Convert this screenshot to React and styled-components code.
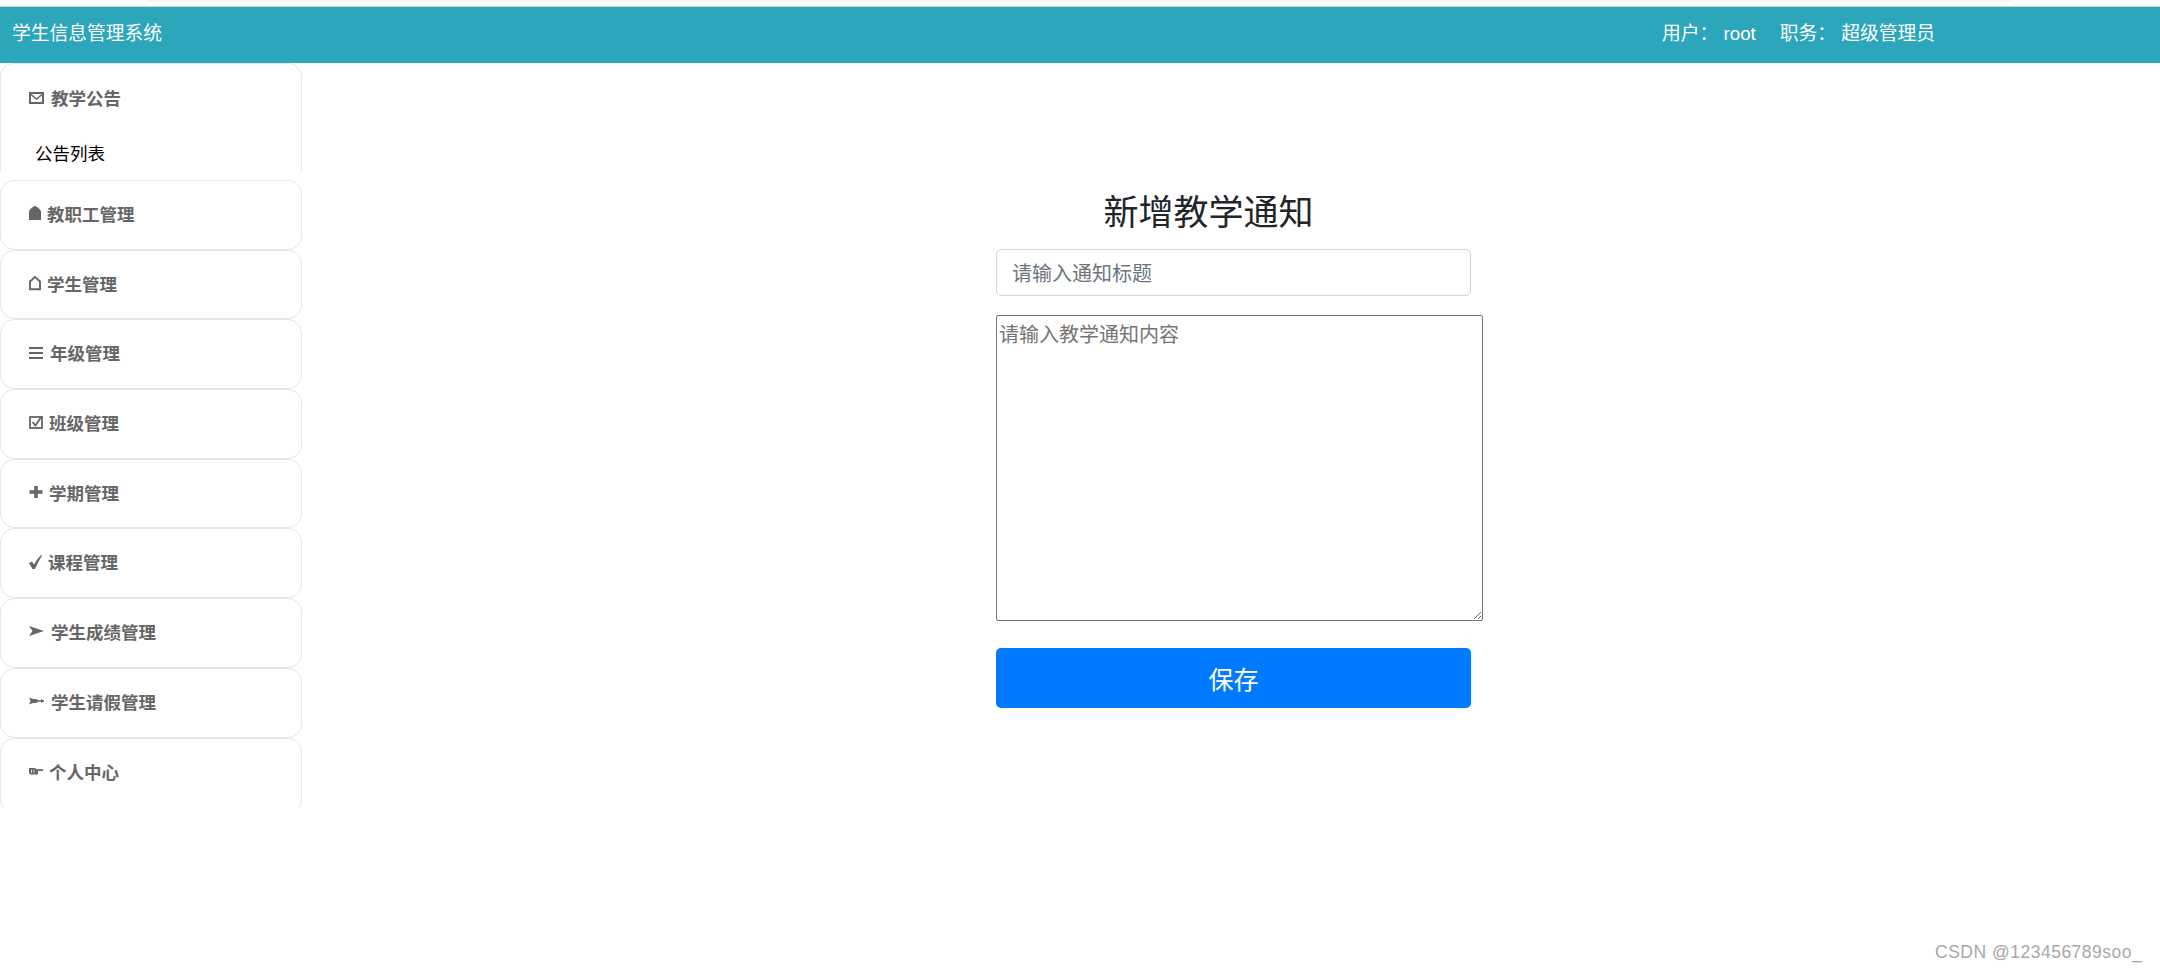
import React from "react";
import styled, { createGlobalStyle } from "styled-components";

const CJK = `"Noto Sans CJK SC", "Liberation Sans", sans-serif`;

const GlobalStyle = createGlobalStyle`
    html, body {
        margin: 0;
        padding: 0;
        background: #fff;
    }
    body {
        font-family: "Liberation Sans", "Noto Sans CJK SC", sans-serif;
    }
    * {
        box-sizing: border-box;
    }
`;

const Page = styled.div`
    position: relative;
    width: 2160px;
    height: 970px;
    overflow: hidden;
`;

const TopStrip = styled.div`
    height: 7px;
    border-bottom: 1px solid #d4d6d6;
`;

const TopBand = styled.div`
    height: 1px;
    margin: 0 149px 0 147px;
    background: #f3f3f3;
`;

const Header = styled.header`
    height: 56px;
    background: #2ca6bb;
    color: #fff;
    display: flex;
    align-items: center;
    font-size: 18.75px;
    font-family: "Liberation Sans", "Noto Sans CJK SC", sans-serif;
    padding: 0 0 7px 12px;
`;

const Brand = styled.div`
    width: 1650px;
`;

const UserInfo = styled.div`
    display: flex;
    white-space: pre;
`;

const InfoItem = styled.span`
    margin-right: 24px;
`;

const Body = styled.div`
    display: flex;
`;

const Sidebar = styled.nav`
    width: 302px;
    height: 745px;
    overflow: hidden;
    flex: none;
`;

const Panel = styled.div`
    height: ${(p) => (p.$open ? "108px" : p.$last ? "76px" : "69.7px")};
    margin-bottom: ${(p) => (p.$open ? "9px" : "0")};
    border: 1px solid #e6e6e6;
    border-bottom: ${(p) => (p.$open ? "none" : "1px solid #e6e6e6")};
    border-radius: ${(p) => (p.$open ? "14px 14px 0 0" : "14px")};
    overflow: hidden;
`;

const PanelHead = styled.div`
    height: ${(p) => (p.$open ? "70px" : "100%")};
    padding-left: 28px;
    display: flex;
    align-items: center;
    gap: ${(p) => p.$gap}px;
    color: #666;
    font-size: 17.5px;
    font-weight: 700;
    font-family: ${CJK};
    padding-bottom: ${(p) => (p.$last ? "9px" : "3px")};
`;

const SubItem = styled.div`
    padding-left: 34px;
    color: #000;
    font-size: 17.5px;
    line-height: 44px;
    margin-top: -3px;
    font-family: ${CJK};
`;

const Main = styled.main`
    flex: 1;
    padding: 126px 0 0 694px;
`;

const Form = styled.form`
    width: 475px;
    display: flex;
    flex-direction: column;
    align-items: flex-start;
`;

const Title = styled.h2`
    width: 425px;
    margin: 0 0 18px;
    font-size: 35px;
    line-height: 42px;
    font-weight: 400;
    color: #212529;
    text-align: center;
    font-family: ${CJK};
`;

const TitleInput = styled.input`
    width: 475px;
    height: 47px;
    padding: 0 15px;
    border: 1px solid #ced4da;
    border-radius: 5px;
    outline: none;
    font-size: 20px;
    font-family: ${CJK};
    &::placeholder {
        color: #6c757d;
    }
`;

const ContentArea = styled.textarea`
    display: block;
    width: 487px;
    height: 306px;
    margin-top: 19px;
    padding: 3px 2px;
    border: 1px solid #767676;
    border-radius: 2px;
    outline: none;
    font-size: 20px;
    line-height: 30px;
    font-family: ${CJK};
    &::placeholder {
        color: #757575;
    }
`;

const SaveButton = styled.button`
    width: 475px;
    height: 60px;
    margin-top: 27px;
    border: none;
    border-radius: 5px;
    background: #007bff;
    color: #fff;
    font-size: 25px;
    font-family: ${CJK};
`;

const Watermark = styled.div`
    position: absolute;
    left: 1935px;
    top: 941px;
    color: #a8a8a8;
    font-size: 17.5px;
    line-height: 22px;
    letter-spacing: 0.5px;
    white-space: nowrap;
`;

const Icon = ({ w = 15, children }) => (
    <svg width={w} height="16" viewBox={`0 0 ${w} 16`} style={{ flex: "none" }}>
        {children}
    </svg>
);

const MailIcon = () => (
    <Icon>
        <rect x="1" y="3" width="13" height="10" fill="none" stroke="#666" strokeWidth="2" />
        <path d="M2 4.5 L7.5 9 L13 4.5" fill="none" stroke="#666" strokeWidth="1.6" />
    </Icon>
);

const BellIcon = () => (
    <Icon w={12}>
        <path d="M0 15 V7 Q0 5 2 3.5 L4.5 1.5 Q6 0.6 7.5 1.5 L10 3.5 Q12 5 12 7 V15 Z" fill="#666" />
    </Icon>
);

const HomeIcon = () => (
    <Icon w={12}>
        <path d="M1 14.2 V6.5 L6 2 L11 6.5 V14.2 Z" fill="none" stroke="#666" strokeWidth="1.9" />
    </Icon>
);

const ListIcon = () => (
    <Icon w={14}>
        <path d="M0 3 H14 M0 8 H14 M0 13 H14" stroke="#666" strokeWidth="2" />
    </Icon>
);

const CheckBoxIcon = () => (
    <Icon w={14}>
        <rect x="1" y="3" width="12" height="11" fill="none" stroke="#666" strokeWidth="1.8" />
        <path d="M3.5 8 L6.5 11.5 L12.5 2.5" fill="none" stroke="#666" strokeWidth="1.9" />
    </Icon>
);

const PlusIcon = () => (
    <Icon w={14}>
        <path d="M7 2 V14 M0.5 8 H13.5" stroke="#666" strokeWidth="3.6" />
    </Icon>
);

const CheckIcon = () => (
    <Icon w={13}>
        <path d="M0 9 L3 7.5 L5 10.5 Q8 5 12 1 L13 1.5 Q9 8 6 15 H3.5 Z" fill="#666" />
    </Icon>
);

const ArrowIcon = () => (
    <Icon>
        <path d="M0 3 L15 8 L0 13 L3.5 8 Z" fill="#666" />
    </Icon>
);

const DartIcon = () => (
    <Icon>
        <path d="M0 4.5 L4 6 H7 L9 7 V9 L7 10 H4 L0 11.5 L1.5 8 Z" fill="#666" />
        <path d="M9 8 H15" stroke="#666" strokeWidth="1.3" />
        <path d="M12 6 L15 8 L12 10 Z" fill="#666" />
    </Icon>
);

const PointIcon = () => (
    <Icon w={14}>
        <path d="M0 5 H6 L7.5 6.3 H14 V8 H9 V11.5 H2 L0 10.5 Z" fill="#666" />
        <path d="M2.5 6.5 V10 M5 6.5 V10" stroke="#fff" strokeWidth="0.7" />
    </Icon>
);

const MENU = [
    { icon: <BellIcon />, label: "教职工管理", gap: 6 },
    { icon: <HomeIcon />, label: "学生管理", gap: 6 },
    { icon: <ListIcon />, label: "年级管理", gap: 7 },
    { icon: <CheckBoxIcon />, label: "班级管理", gap: 6 },
    { icon: <PlusIcon />, label: "学期管理", gap: 6 },
    { icon: <CheckIcon />, label: "课程管理", gap: 6 },
    { icon: <ArrowIcon />, label: "学生成绩管理", gap: 7 },
    { icon: <DartIcon />, label: "学生请假管理", gap: 7 },
    { icon: <PointIcon />, label: "个人中心", gap: 6 },
];

function App() {
    return (
        <Page>
            <GlobalStyle />
            <TopStrip>
                <TopBand />
            </TopStrip>
            <Header>
                <Brand>学生信息管理系统</Brand>
                <UserInfo>
                    <InfoItem>用户： root</InfoItem>
                    <InfoItem>职务： 超级管理员</InfoItem>
                </UserInfo>
            </Header>
            <Body>
                <Sidebar>
                    <Panel $open>
                        <PanelHead $open $gap={7}>
                            <MailIcon />
                            教学公告
                        </PanelHead>
                        <SubItem>公告列表</SubItem>
                    </Panel>
                    {MENU.map((item, i) => (
                        <Panel key={item.label} $last={i === MENU.length - 1}>
                            <PanelHead $gap={item.gap} $last={i === MENU.length - 1}>
                                {item.icon}
                                {item.label}
                            </PanelHead>
                        </Panel>
                    ))}
                </Sidebar>
                <Main>
                    <Form onSubmit={(e) => e.preventDefault()}>
                        <Title>新增教学通知</Title>
                        <TitleInput placeholder="请输入通知标题" />
                        <ContentArea placeholder="请输入教学通知内容" />
                        <SaveButton>保存</SaveButton>
                    </Form>
                </Main>
            </Body>
            <Watermark>CSDN @123456789soo_</Watermark>
        </Page>
    );
}

export default App;
